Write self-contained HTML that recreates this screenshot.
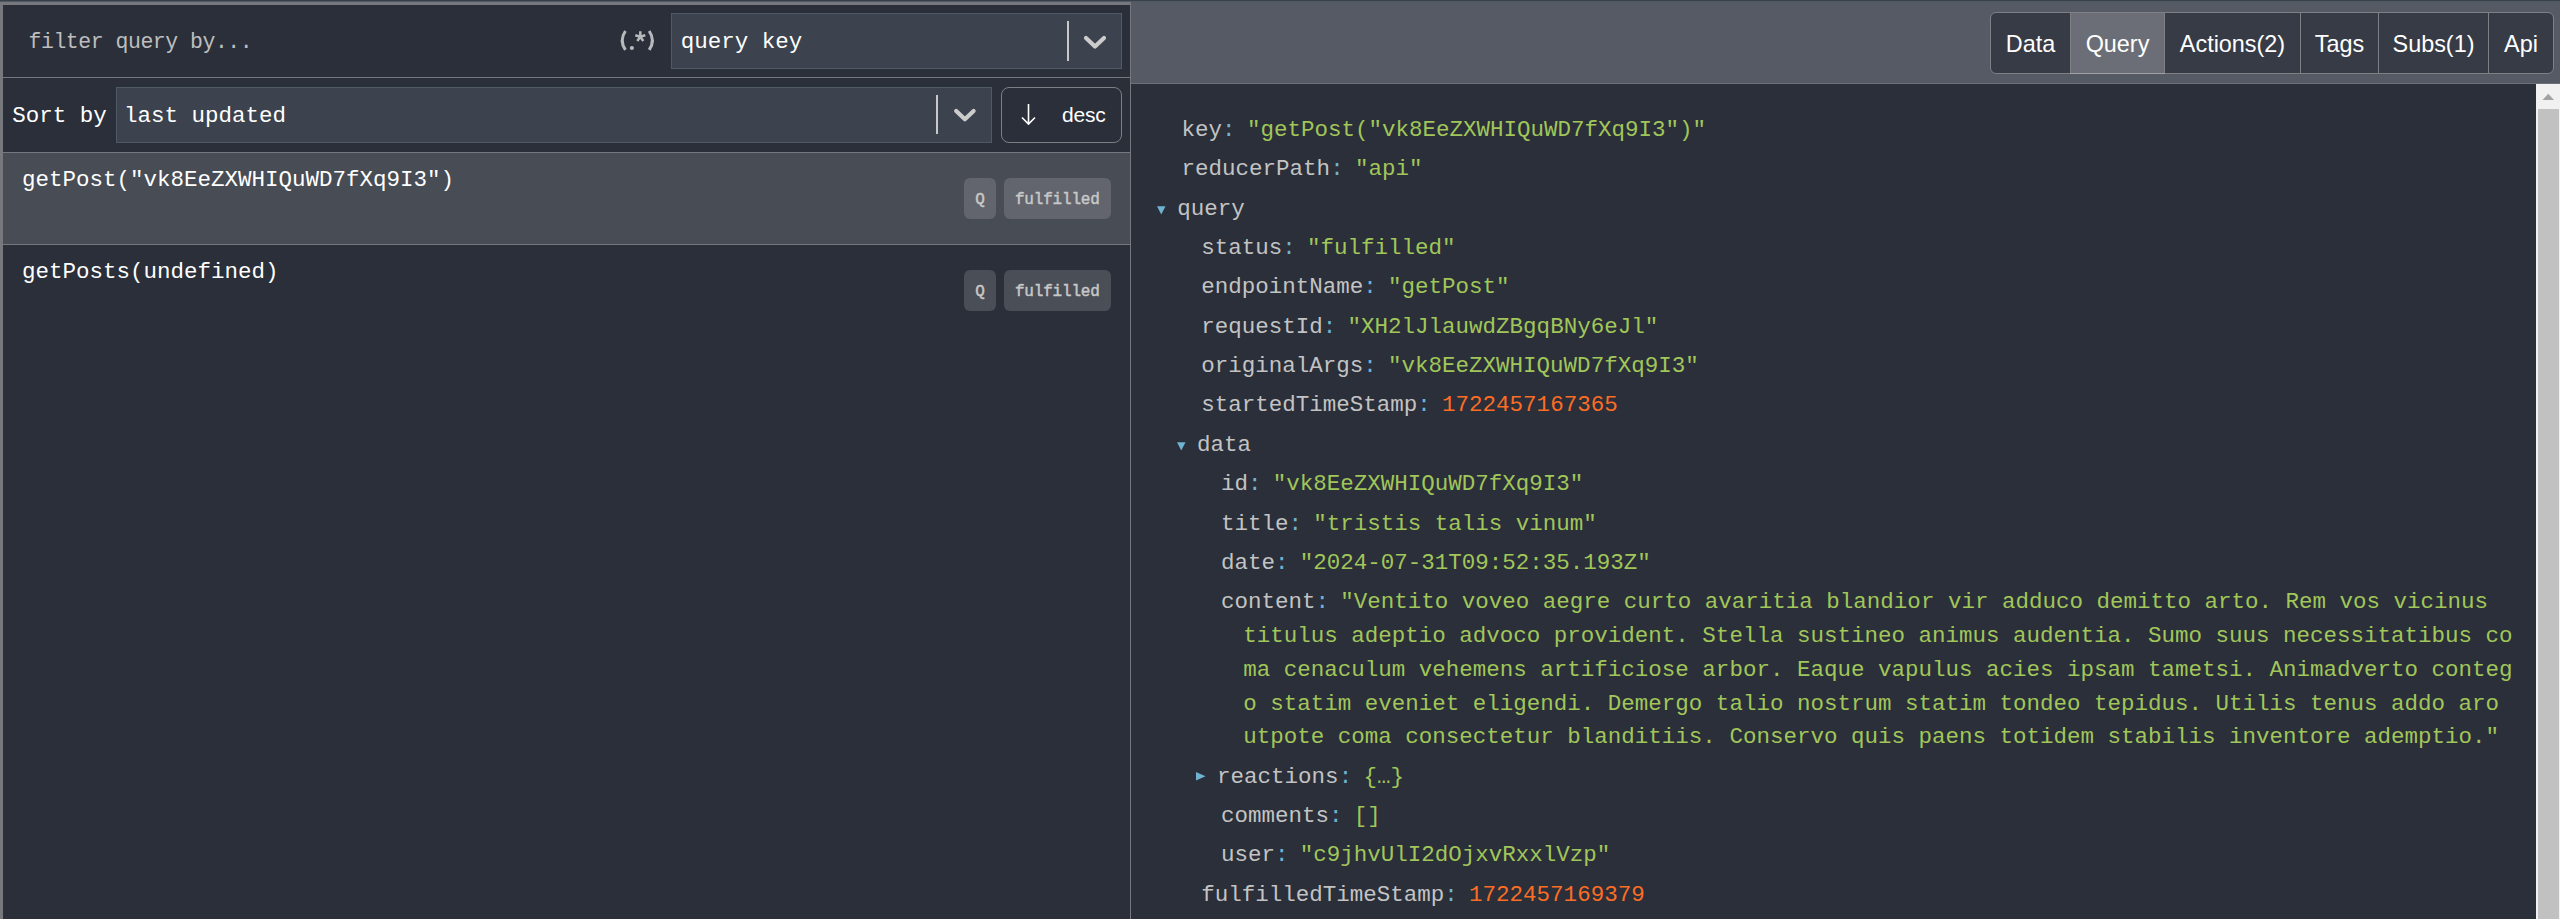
<!DOCTYPE html>
<html><head><meta charset="utf-8"><title>RTK Query</title>
<style>
html,body{margin:0;padding:0;width:2560px;height:919px;overflow:hidden;background:#2a2f3a;}
.t{position:absolute;white-space:pre;line-height:40px;}
</style></head><body>
<div style="position:absolute;left:0px;top:0px;width:2560px;height:1px;background:#3a3f4c"></div>
<div style="position:absolute;left:0px;top:1px;width:2560px;height:1px;background:#4f5963"></div>
<div style="position:absolute;left:0px;top:2px;width:1131px;height:917px;background:#77787e"></div>
<div style="position:absolute;left:3px;top:5px;width:1127px;height:914px;background:#2a2f3a"></div>
<div style="position:absolute;left:3px;top:77px;width:1127px;height:1px;background:#77787e"></div>
<div style="position:absolute;left:3px;top:152px;width:1127px;height:1px;background:#77787e"></div>
<div style="position:absolute;left:3px;top:153px;width:1127px;height:91px;background:#484c55"></div>
<div style="position:absolute;left:3px;top:244px;width:1127px;height:1px;background:#77787e"></div>
<div class="t" style="left:28.60px;top:22.28px;font-size:21.5px;font-family:'Liberation Mono', monospace;color:#bebebe;letter-spacing:-0.48px;">filter query by...</div>
<svg style="position:absolute;left:610px;top:20px" width="60" height="40" viewBox="0 0 60 40"><path d="M15.4 11.0 Q9.0 20.45 15.4 29.9" fill="none" stroke="#b8b9bd" stroke-width="3"/><path d="M39.2 11.0 Q45.6 20.45 39.2 29.9" fill="none" stroke="#b8b9bd" stroke-width="3"/><circle cx="21.9" cy="28.0" r="2.1" fill="#b8b9bd"/><path d="M30.3 11.2 V16.8 M25.3 15.3 L30.3 16.8 L35.3 15.3 M27.3 21.0 L30.3 16.8 L33.3 21.0" fill="none" stroke="#b8b9bd" stroke-width="2.5"/></svg>
<div style="position:absolute;left:671px;top:13px;width:451px;height:56px;box-sizing:border-box;border:1px solid #4f5a65;background:#3c434e"></div>
<div class="t" style="left:680.80px;top:22.01px;font-size:22.5px;font-family:'Liberation Mono', monospace;color:#ffffff;">query key</div>
<div style="position:absolute;left:1067px;top:21px;width:2px;height:40px;background:#c8c8c8"></div>
<svg style="position:absolute;left:1080px;top:30px" width="30" height="24" viewBox="0 0 30 24"><polyline points="6,8 15,16.5 24,8" fill="none" stroke="#cccccc" stroke-width="4.2" stroke-linecap="round" stroke-linejoin="round"/></svg>
<div class="t" style="left:12.30px;top:96.01px;font-size:22.5px;font-family:'Liberation Mono', monospace;color:#ffffff;">Sort by</div>
<div style="position:absolute;left:116px;top:87px;width:876px;height:56px;box-sizing:border-box;border:1px solid #4f5a65;background:#3c434e"></div>
<div class="t" style="left:123.90px;top:96.01px;font-size:22.5px;font-family:'Liberation Mono', monospace;color:#ffffff;">last updated</div>
<div style="position:absolute;left:936px;top:95px;width:2px;height:39px;background:#c8c8c8"></div>
<svg style="position:absolute;left:949.5px;top:102.8px" width="30" height="24" viewBox="0 0 30 24"><polyline points="6.2,8 14.9,16.2 23.6,8" fill="none" stroke="#cccccc" stroke-width="4.2" stroke-linecap="round" stroke-linejoin="round"/></svg>
<div style="position:absolute;left:1001px;top:87px;width:121px;height:56px;box-sizing:border-box;border:1px solid #7e7f85;border-radius:8px;background:#2a2f3a"></div>
<svg style="position:absolute;left:1018px;top:100px" width="22" height="28" viewBox="0 0 22 28"><path d="M10.5 4 V24 M4 17.5 L10.5 24 L17 17.5" fill="none" stroke="#ffffff" stroke-width="1.6"/></svg>
<div class="t" style="left:1062.00px;top:95.42px;font-size:21px;font-family:'Liberation Sans', sans-serif;color:#ffffff;letter-spacing:-0.2px;">desc</div>
<div class="t" style="left:22.00px;top:159.81px;font-size:22.5px;font-family:'Liberation Mono', monospace;color:#ffffff;">getPost("vk8EeZXWHIQuWD7fXq9I3")</div>
<div class="t" style="left:22.00px;top:252.01px;font-size:22.5px;font-family:'Liberation Mono', monospace;color:#ffffff;">getPosts(undefined)</div>
<div style="position:absolute;left:964px;top:178px;width:32px;height:41px;background:#62656d;border-radius:6px"></div>
<div style="position:absolute;left:1004px;top:178px;width:107px;height:41px;background:#62656d;border-radius:6px"></div>
<div class="t" style="left:975.20px;top:180.24px;font-size:16px;font-family:'Liberation Mono', monospace;color:#c8c8c8;-webkit-text-stroke:0.45px #c8c8c8;">Q</div>
<div class="t" style="left:1014.90px;top:180.24px;font-size:16px;font-family:'Liberation Mono', monospace;color:#c8c8c8;-webkit-text-stroke:0.45px #c8c8c8;letter-spacing:-0.18px;">fulfilled</div>
<div style="position:absolute;left:964px;top:270px;width:32px;height:41px;background:#4a4e57;border-radius:6px"></div>
<div style="position:absolute;left:1004px;top:270px;width:107px;height:41px;background:#4a4e57;border-radius:6px"></div>
<div class="t" style="left:975.20px;top:272.24px;font-size:16px;font-family:'Liberation Mono', monospace;color:#c8c8c8;-webkit-text-stroke:0.45px #c8c8c8;">Q</div>
<div class="t" style="left:1014.90px;top:272.24px;font-size:16px;font-family:'Liberation Mono', monospace;color:#c8c8c8;-webkit-text-stroke:0.45px #c8c8c8;letter-spacing:-0.18px;">fulfilled</div>
<div style="position:absolute;left:1131px;top:2px;width:1429px;height:81px;background:#555a64"></div>
<div style="position:absolute;left:1131px;top:83px;width:1429px;height:1px;background:#6d7078"></div>
<div style="position:absolute;left:1131px;top:84px;width:1405px;height:835px;background:#2a2f3a"></div>
<div style="position:absolute;left:1990px;top:12px;width:564px;height:62px;box-sizing:border-box;border:1px solid #7e8086;border-radius:6px;background:#373b46"></div>
<div style="position:absolute;left:2071px;top:13px;width:93px;height:60px;background:#6b6e77"></div>
<div style="position:absolute;left:2070px;top:73px;width:95px;height:1px;background:#a0a1a6"></div>
<div style="position:absolute;left:2070px;top:13px;width:1px;height:60px;background:#7e8086"></div>
<div style="position:absolute;left:2164px;top:13px;width:1px;height:60px;background:#7e8086"></div>
<div style="position:absolute;left:2300px;top:13px;width:1px;height:60px;background:#7e8086"></div>
<div style="position:absolute;left:2378px;top:13px;width:1px;height:60px;background:#7e8086"></div>
<div style="position:absolute;left:2488px;top:13px;width:1px;height:60px;background:#7e8086"></div>
<div class="t" style="left:1991px;width:79px;text-align:center;top:23.89px;font-size:23.4px;font-family:'Liberation Sans', sans-serif;color:#fff">Data</div>
<div class="t" style="left:2071px;width:93px;text-align:center;top:23.89px;font-size:23.4px;font-family:'Liberation Sans', sans-serif;color:#fff">Query</div>
<div class="t" style="left:2165px;width:135px;text-align:center;top:23.89px;font-size:23.4px;font-family:'Liberation Sans', sans-serif;color:#fff">Actions(2)</div>
<div class="t" style="left:2301px;width:77px;text-align:center;top:23.89px;font-size:23.4px;font-family:'Liberation Sans', sans-serif;color:#fff">Tags</div>
<div class="t" style="left:2379px;width:109px;text-align:center;top:23.89px;font-size:23.4px;font-family:'Liberation Sans', sans-serif;color:#fff">Subs(1)</div>
<div class="t" style="left:2489px;width:64px;text-align:center;top:23.89px;font-size:23.4px;font-family:'Liberation Sans', sans-serif;color:#fff">Api</div>
<div class="t" style="left:1181.60px;top:109.81px;font-size:22.5px;font-family:'Liberation Mono', monospace;color:#c3c3c3;"><span style="color:#c3c3c3">key</span><span style="color:#6fb3d2">:</span><span style="margin-left:11.25px;color:#a1c659">"getPost("vk8EeZXWHIQuWD7fXq9I3")"</span></div>
<div class="t" style="left:1181.60px;top:149.19px;font-size:22.5px;font-family:'Liberation Mono', monospace;color:#c3c3c3;"><span style="color:#c3c3c3">reducerPath</span><span style="color:#6fb3d2">:</span><span style="margin-left:11.25px;color:#a1c659">"api"</span></div>
<div class="t" style="left:1177.20px;top:188.56px;font-size:22.5px;font-family:'Liberation Mono', monospace;color:#c3c3c3;"><span style="color:#c3c3c3">query</span></div>
<svg style="position:absolute;left:1157.20px;top:205.75px" width="9" height="9" viewBox="0 0 9 9"><polygon points="0,0.2 8.5,0.2 4.25,8.6" fill="#6fb3d2"/></svg>
<div class="t" style="left:1201.30px;top:227.94px;font-size:22.5px;font-family:'Liberation Mono', monospace;color:#c3c3c3;"><span style="color:#c3c3c3">status</span><span style="color:#6fb3d2">:</span><span style="margin-left:11.25px;color:#a1c659">"fulfilled"</span></div>
<div class="t" style="left:1201.30px;top:267.31px;font-size:22.5px;font-family:'Liberation Mono', monospace;color:#c3c3c3;"><span style="color:#c3c3c3">endpointName</span><span style="color:#6fb3d2">:</span><span style="margin-left:11.25px;color:#a1c659">"getPost"</span></div>
<div class="t" style="left:1201.30px;top:306.69px;font-size:22.5px;font-family:'Liberation Mono', monospace;color:#c3c3c3;"><span style="color:#c3c3c3">requestId</span><span style="color:#6fb3d2">:</span><span style="margin-left:11.25px;color:#a1c659">"XH2lJlauwdZBgqBNy6eJl"</span></div>
<div class="t" style="left:1201.30px;top:346.06px;font-size:22.5px;font-family:'Liberation Mono', monospace;color:#c3c3c3;"><span style="color:#c3c3c3">originalArgs</span><span style="color:#6fb3d2">:</span><span style="margin-left:11.25px;color:#a1c659">"vk8EeZXWHIQuWD7fXq9I3"</span></div>
<div class="t" style="left:1201.30px;top:385.44px;font-size:22.5px;font-family:'Liberation Mono', monospace;color:#c3c3c3;"><span style="color:#c3c3c3">startedTimeStamp</span><span style="color:#6fb3d2">:</span><span style="margin-left:11.25px;color:#fc6d24">1722457167365</span></div>
<div class="t" style="left:1196.90px;top:424.81px;font-size:22.5px;font-family:'Liberation Mono', monospace;color:#c3c3c3;"><span style="color:#c3c3c3">data</span></div>
<svg style="position:absolute;left:1176.90px;top:442.00px" width="9" height="9" viewBox="0 0 9 9"><polygon points="0,0.2 8.5,0.2 4.25,8.6" fill="#6fb3d2"/></svg>
<div class="t" style="left:1221.00px;top:464.19px;font-size:22.5px;font-family:'Liberation Mono', monospace;color:#c3c3c3;"><span style="color:#c3c3c3">id</span><span style="color:#6fb3d2">:</span><span style="margin-left:11.25px;color:#a1c659">"vk8EeZXWHIQuWD7fXq9I3"</span></div>
<div class="t" style="left:1221.00px;top:503.56px;font-size:22.5px;font-family:'Liberation Mono', monospace;color:#c3c3c3;"><span style="color:#c3c3c3">title</span><span style="color:#6fb3d2">:</span><span style="margin-left:11.25px;color:#a1c659">"tristis talis vinum"</span></div>
<div class="t" style="left:1221.00px;top:542.94px;font-size:22.5px;font-family:'Liberation Mono', monospace;color:#c3c3c3;"><span style="color:#c3c3c3">date</span><span style="color:#6fb3d2">:</span><span style="margin-left:11.25px;color:#a1c659">"2024-07-31T09:52:35.193Z"</span></div>
<div class="t" style="left:1221.00px;top:582.31px;font-size:22.5px;font-family:'Liberation Mono', monospace;color:#c3c3c3;"><span style="color:#c3c3c3">content</span><span style="color:#6fb3d2">:</span><span style="margin-left:11.25px;color:#a1c659">"Ventito voveo aegre curto avaritia blandior vir adduco demitto arto. Rem vos vicinus</span></div>
<div class="t" style="left:1243.30px;top:616.06px;font-size:22.5px;font-family:'Liberation Mono', monospace;color:#a1c659;">titulus adeptio advoco provident. Stella sustineo animus audentia. Sumo suus necessitatibus co</div>
<div class="t" style="left:1243.30px;top:649.81px;font-size:22.5px;font-family:'Liberation Mono', monospace;color:#a1c659;">ma cenaculum vehemens artificiose arbor. Eaque vapulus acies ipsam tametsi. Animadverto conteg</div>
<div class="t" style="left:1243.30px;top:683.56px;font-size:22.5px;font-family:'Liberation Mono', monospace;color:#a1c659;">o statim eveniet eligendi. Demergo talio nostrum statim tondeo tepidus. Utilis tenus addo aro</div>
<div class="t" style="left:1243.30px;top:717.31px;font-size:22.5px;font-family:'Liberation Mono', monospace;color:#a1c659;">utpote coma consectetur blanditiis. Conservo quis paens totidem stabilis inventore ademptio."</div>
<div class="t" style="left:1217.10px;top:756.69px;font-size:22.5px;font-family:'Liberation Mono', monospace;color:#c3c3c3;"><span style="color:#c3c3c3">reactions</span><span style="color:#6fb3d2">:</span><span style="margin-left:11.25px;color:#a1c659">{…}</span></div>
<svg style="position:absolute;left:1195.90px;top:772.47px" width="11" height="10" viewBox="0 0 11 10"><polygon points="0,0 9.6,4.3 0,8.6" fill="#6fb3d2"/></svg>
<div class="t" style="left:1221.00px;top:796.06px;font-size:22.5px;font-family:'Liberation Mono', monospace;color:#c3c3c3;"><span style="color:#c3c3c3">comments</span><span style="color:#6fb3d2">:</span><span style="margin-left:11.25px;color:#a1c659">[]</span></div>
<div class="t" style="left:1221.00px;top:835.44px;font-size:22.5px;font-family:'Liberation Mono', monospace;color:#c3c3c3;"><span style="color:#c3c3c3">user</span><span style="color:#6fb3d2">:</span><span style="margin-left:11.25px;color:#a1c659">"c9jhvUlI2dOjxvRxxlVzp"</span></div>
<div class="t" style="left:1201.30px;top:874.81px;font-size:22.5px;font-family:'Liberation Mono', monospace;color:#c3c3c3;"><span style="color:#c3c3c3">fulfilledTimeStamp</span><span style="color:#6fb3d2">:</span><span style="margin-left:11.25px;color:#fc6d24">1722457169379</span></div>
<div style="position:absolute;left:2536px;top:84px;width:24px;height:835px;background:#f1f1f1"></div>
<svg style="position:absolute;left:2536px;top:84px" width="24" height="24" viewBox="0 0 24 24"><polygon points="6.5,16 18,16 12.25,9.8" fill="#a3a3a3"/></svg>
<div style="position:absolute;left:2538px;top:109px;width:21px;height:810px;background:#c1c1c1"></div>
</body></html>
